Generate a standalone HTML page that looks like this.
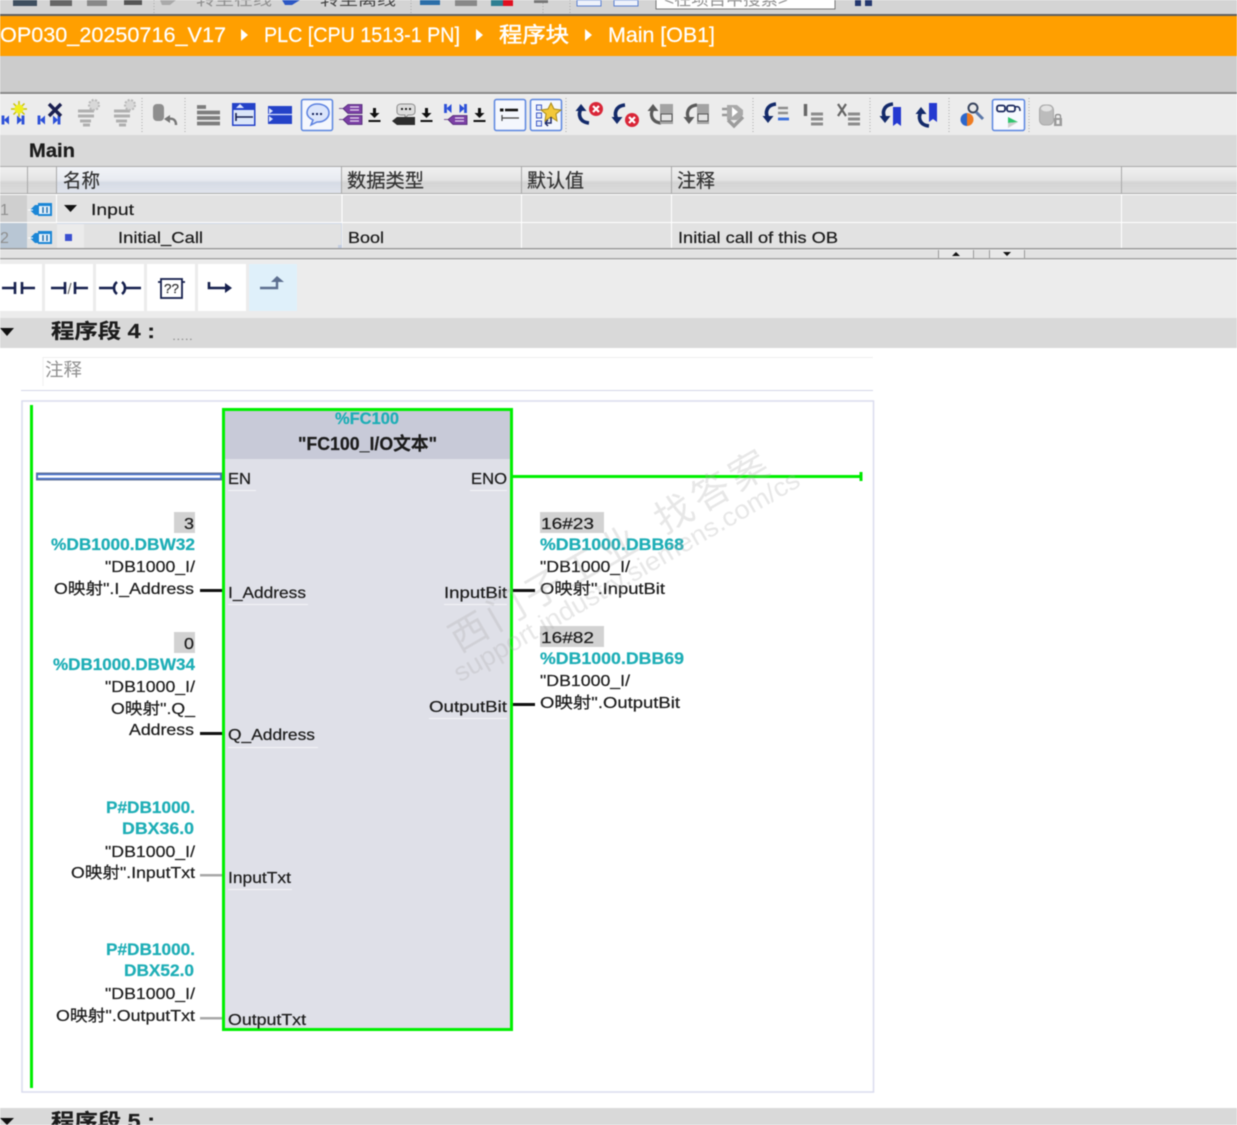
<!DOCTYPE html>
<html lang="zh"><head><meta charset="utf-8"><title>Main [OB1]</title>
<style>
html,body{margin:0;padding:0;background:#fff;width:1237px;height:1125px;overflow:hidden}
svg{display:block;filter:blur(.45px)}
text{font-family:"Liberation Sans","Noto Sans CJK SC",sans-serif;font-size:16px;fill:#1c1c1c;stroke:#1c1c1c;stroke-width:.22px}
.b{font-weight:bold}
.t{fill:#1eaeb6;stroke:#1eaeb6;font-weight:bold;font-size:17px}
.h{font-size:19px;fill:#333;stroke:#333}
.c{fill:#fff;stroke:#fff;font-size:21px}
.g{fill:#8f8f8f;stroke:none}
.wm{fill:#a9a9a9;fill-opacity:.28;stroke:none}
</style></head><body>
<svg width="1237" height="1125" viewBox="0 0 1237 1125" xmlns="http://www.w3.org/2000/svg">
<defs>
<linearGradient id="hd" x1="0" y1="0" x2="0" y2="1"><stop offset="0" stop-color="#f0f0f0"/><stop offset=".5" stop-color="#e4e4e4"/><stop offset=".6" stop-color="#d4d4d4"/><stop offset="1" stop-color="#dcdcdc"/></linearGradient>
<linearGradient id="hb" x1="0" y1="0" x2="0" y2="1"><stop offset="0" stop-color="#f2f4f8"/><stop offset=".5" stop-color="#e8ebf1"/><stop offset=".6" stop-color="#d6dbe5"/><stop offset="1" stop-color="#e0e4ec"/></linearGradient>
<g id="tag"><path d="M-12 0l5-5h3v-2h14v13h-14v-1h-3z" fill="#1b86d6"/><rect x="-3" y="-4" width="11" height="8" fill="#e6f2fb"/><path d="M1-3v6M5-3v6" stroke="#1668aa" stroke-width="1.4"/><path d="M-14 0h5" stroke="#fff" stroke-width="1"/></g>
<g id="pt"><path d="M-12-0.500h4M-8-.5l5-4h14v9h-14z" fill="#7b3fa5" stroke="#4a2370" stroke-width=".8"/><path d="M-1-2h9M-1 1h9" stroke="#e8dcf2" stroke-width="1.300"/></g>
<g id="dl"><path d="M0-7v6" stroke="#111" stroke-width="3"/><path d="M-5-2h10l-5 5z" fill="#111"/><path d="M-6 6h12" stroke="#111" stroke-width="2"/></g>
<g id="kk"><path d="M-10-4.500v9M-8 0h4M4 0h4M10-4.500v9" stroke="#2b4fd8" stroke-width="2.800" fill="none"/><path d="M-9 0l5-4.500v9zM9 0l-5-4.500v9z" fill="#2b4fd8"/></g>
<g id="gl"><path d="M-12 6h16M-12 11h16M-10 16h11M-7 20h7" stroke="#b0b0b0" stroke-width="3"/><circle cx="4" cy="0" r="5" fill="#d8d8d8" stroke="#b9b9b9" stroke-width="2" stroke-dasharray="2 1.500"/></g>
<g id="ar"><path d="M5-9C-5-8-6 0-3 5" stroke="#132a6a" stroke-width="3.600" fill="none"/><path d="M-8.500 3h11l-5.500 7z" fill="#132a6a"/></g>
<g id="aru"><path d="M5 9C-5 8-6 0-3-5" stroke="#132a6a" stroke-width="3.600" fill="none"/><path d="M-8.500-3h11l-5.500-7z" fill="#132a6a"/></g>
<g id="ag"><path d="M5-9C-5-8-6 0-3 5" stroke="#5a5a5a" stroke-width="3.200" fill="none"/><path d="M-8.500 3h11l-5.500 7z" fill="#5a5a5a"/></g>
<g id="agu"><path d="M5 9C-5 8-6 0-3-5" stroke="#5a5a5a" stroke-width="3.200" fill="none"/><path d="M-8.500-3h11l-5.500-7z" fill="#5a5a5a"/></g>
<g id="er"><circle r="7" fill="#d92638"/><path d="M-3-3l6 6M3-3l-6 6" stroke="#fff" stroke-width="2.200"/></g>
<g id="bars"><path d="M-6-5H6M-6 0H6M-6 5H6" stroke="#8c8c8c" stroke-width="3"/></g>
</defs>

<!-- top partial toolbar -->
<rect width="1237" height="15" fill="#d4d4d4"/>
<rect x="13" y="0" width="24" height="6" fill="#3f4f5f"/><rect x="50" y="0" width="22" height="6" fill="#666"/><rect x="87" y="0" width="20" height="6" fill="#888"/><rect x="124" y="0" width="18" height="5" fill="#555"/>
<path d="M160 0h16l-6 5h-8z" fill="#aaa"/>
<path d="M282 0h18l-8 5h-7z" fill="#2c57c4"/>
<text x="196" y="5" textLength="76" lengthAdjust="spacingAndGlyphs" class="g">转至在线</text>
<text x="320" y="5" textLength="76" lengthAdjust="spacingAndGlyphs" style="fill:#444;stroke:none">转至离线</text>
<path d="M154 0v14M411 0v14M543 0v14M570 0v14" stroke="#aaa" stroke-dasharray="1 2"/>
<rect x="420" y="0" width="20" height="5" fill="#2b6ea8"/><rect x="455" y="0" width="22" height="6" fill="#888"/><rect x="491" y="0" width="12" height="6" fill="#2d7f92"/><rect x="503" y="0" width="10" height="6" fill="#e01020"/>
<rect x="534" y="0" width="14" height="3" fill="#777"/>
<rect x="577" y="0" width="24" height="6" fill="#eef2fb" stroke="#5a7fd0"/><rect x="614" y="0" width="24" height="6" fill="#eef2fb" stroke="#5a7fd0"/>
<rect x="656" y="-3" width="179" height="12" fill="#fff" stroke="#777"/>
<text x="664" y="5" textLength="124" lengthAdjust="spacingAndGlyphs" class="g">&lt;在项目中搜索&gt;</text>
<rect x="855" y="0" width="6" height="6" fill="#24376e"/><rect x="865" y="0" width="7" height="6" fill="#24376e"/>
<rect y="14" width="1237" height="2" fill="#5f5f5f"/>

<!-- breadcrumb -->
<rect y="16" width="1237" height="40" fill="#ff9f00"/>
<text class="c" x="0" y="42" textLength="226" lengthAdjust="spacingAndGlyphs">OP030_20250716_V17</text>
<path d="M241 29l7 6-7 6zM476 29l7 6-7 6zM585 29l7 6-7 6z" fill="#fff"/>
<text class="c" x="264" y="42" textLength="196" lengthAdjust="spacingAndGlyphs">PLC [CPU 1513-1 PN]</text>
<text class="c" x="499" y="42" textLength="70" lengthAdjust="spacingAndGlyphs" style="stroke-width:.5px">程序块</text>
<text class="c" x="608" y="42" textLength="107" lengthAdjust="spacingAndGlyphs">Main [OB1]</text>

<rect y="56" width="1237" height="37" fill="#cccccc"/>
<rect y="92" width="1237" height="2" fill="#8a8a8a"/>
<rect y="94" width="1237" height="1" fill="#f6f6f6"/>

<!-- toolbar -->
<rect y="95" width="1237" height="40" fill="#ececec"/>
<path d="M142 98v34M185 98v34M566 98v34M753 98v34M870 98v34M949 98v34M1029 98v34" stroke="#aaa" stroke-dasharray="1 2"/>
<rect x="301.500" y="99.500" width="31" height="31" rx="2" fill="#f4f7fd" stroke="#5b86e0" stroke-width="1.500"/>
<rect x="494.500" y="99.500" width="31" height="31" rx="2" fill="#f4f7fd" stroke="#5b86e0" stroke-width="1.500"/>
<rect x="530.500" y="99.500" width="31" height="31" rx="2" fill="#f4f7fd" stroke="#5b86e0" stroke-width="1.500"/>
<rect x="992.500" y="99.500" width="32" height="31" rx="2" fill="#f7f9fe" stroke="#5b86e0" stroke-width="1.500"/>

<!-- new network / delete -->
<use href="#kk" x="13" y="120"/>
<path d="M11 109H27M19 101v16M13.500 103.500l11 11M13.500 114.500l11-11" stroke="#c9c400" stroke-width="1.500"/><circle cx="19" cy="109" r="4.500" fill="#f0ee20"/>
<use href="#kk" x="49" y="120"/>
<path d="M49 104l12 12M61 104l-12 12" stroke="#1b2050" stroke-width="3.400"/>
<use href="#gl" x="90" y="105"/>
<use href="#gl" x="126" y="105"/>
<!-- undo db -->
<rect x="153" y="104" width="11" height="17" rx="4" fill="#8e8e8e"/><path d="M176 125c0-6-4-7-8-6" stroke="#777" stroke-width="2.400" fill="none"/><path d="M164 119l6-4v8z" fill="#777"/>
<!-- lists -->
<path d="M197 107h9M197 112.500h23M197 118h23M197 123.500h23" stroke="#7d7d7d" stroke-width="3.800"/>
<rect x="232.750" y="103.750" width="22" height="21.500" fill="#dbe6f9" stroke="#2442c8" stroke-width="1.500"/><rect x="233" y="103" width="22" height="7" fill="#2442c8"/><path d="M236 108h8l-4-4z" fill="#dfe7ff"/><path d="M236 117h17M236 113v8" stroke="#141e50" stroke-width="1.600"/>
<rect x="268" y="106" width="24" height="18" fill="#2442c8"/><path d="M268 114.500h24" stroke="#dfe7ff" stroke-width="1.200"/><path d="M269 108l4 3-4 3zM269 116l4 3-4 3z" fill="#dfe7ff"/>
<!-- comment -->
<path d="M317 104c8 0 12 4 12 9s-5 9-11 9l-1 0-6 3 2-5c-4-2-6-4-6-7 0-5 4-9 10-9z" fill="#dbe5fb" stroke="#5a80e0" stroke-width="1.500"/><path d="M312 114h2M316 114h2M320 114h2" stroke="#14205a" stroke-width="2"/>
<!-- purple tags -->
<use href="#pt" x="351" y="109"/><use href="#pt" x="351" y="120"/>
<use href="#dl" x="374.500" y="115"/>
<!-- grey speech -->
<path d="M397 107c0-2 2-3 4-3h10c2 0 4 1 4 3v5c0 2-2 3-4 3h-3l-3 3v-3h-4c-2 0-4-1-4-3z" fill="#dcdcdc" stroke="#8a8a8a"/><path d="M401 109h2M405 109h2M409 109h2" stroke="#222" stroke-width="2"/><path d="M392 121l5-4h18v8h-18z" fill="#2d2d2d"/>
<use href="#dl" x="426.500" y="115"/>
<use href="#kk" x="455.500" y="108.500"/><use href="#pt" x="456" y="120"/>
<use href="#dl" x="479.500" y="115"/>
<!-- list highlight -->
<path d="M500 110h3.500" stroke="#111" stroke-width="3"/><path d="M505 110h13" stroke="#111" stroke-width="2.600"/><path d="M502 118h17M502 115v6" stroke="#444" stroke-width="1.200"/>
<!-- favourites -->
<path d="M536.500 105h5v5h-5zM536.500 113h5v5h-5zM536.500 121h5v5h-5z" fill="#e6ecfb" stroke="#3c57c4"/>
<path d="M551 103l3 6 7 1-5 4 1 7-6-4-6 4 1-7-5-4 7-1z" fill="#f3c83a" stroke="#a98a1a"/><path d="M551 117v6h-6M545 123l3-3M545 123l3 3" stroke="#1d2a6b" stroke-width="1.500" fill="none"/>
<!-- arrows + errors -->
<use href="#aru" x="584" y="114"/><use href="#er" x="596" y="109"/>
<use href="#ar" x="620" y="114"/><use href="#er" x="632" y="120"/>
<use href="#agu" x="656" y="114"/><rect x="660" y="104" width="13" height="20" fill="#a3a3a3"/><rect x="661" y="114" width="11" height="7" fill="#e2e2e2" stroke="#555"/>
<use href="#ag" x="692" y="114"/><rect x="697" y="104" width="12" height="20" fill="#a3a3a3"/><rect x="698" y="114" width="10" height="7" fill="#e2e2e2" stroke="#555"/>
<path d="M727 105h10l6 5v5l-6 5h-10z" fill="#a9a9a9"/><path d="M732 107l6 5-6 5z" fill="#fff"/><path d="M722 109h5M722 115h5" stroke="#999" stroke-width="2.400"/><path d="M728 120l6 6 9-9" stroke="#9c9c9c" stroke-width="3.400" fill="none"/>
<!-- arrow group 2 -->
<use href="#ar" x="771" y="113"/><path d="M778 108h10M778 113h10" stroke="#8f8f8f" stroke-width="2.600"/><path d="M778 119h11" stroke="#3a6edc" stroke-width="2.800"/>
<path d="M805.500 104v12" stroke="#666" stroke-width="3.400"/><use href="#bars" x="817" y="119"/>
<path d="M838 104l8 12M846 104l-8 12" stroke="#666" stroke-width="2.200"/><use href="#bars" x="854" y="119"/>
<!-- bookmarks -->
<use href="#ar" x="888" y="113"/><path d="M893 107h8v19l-4-3-4 3z" fill="#2439d0"/>
<use href="#aru" x="924" y="117"/><path d="M929 103h8v19l-4-3-4 3z" fill="#2439d0"/>
<!-- search -->
<path d="M967 113a6.500 6.500 0 0 0 0 13z" fill="#2d67cc"/><path d="M967 113a6.500 6.500 0 0 1 0 13z" fill="#ee7b21"/><circle cx="973" cy="108" r="4.500" fill="#e8e8e8" stroke="#39455e" stroke-width="2"/><path d="M976 112l7 7" stroke="#5b78a8" stroke-width="3"/>
<!-- glasses -->
<rect x="997" y="105.500" width="8" height="6" rx="2" fill="#fff" stroke="#1c2a60" stroke-width="1.800"/><rect x="1007" y="105.500" width="8" height="6" rx="2" fill="#fff" stroke="#1c2a60" stroke-width="1.800"/><path d="M1015 107c3-1 5 0 5 4" fill="none" stroke="#1c2a60" stroke-width="1.600"/>
<path d="M1008 117l10 5-10 1z" fill="#2fc56d"/><path d="M1008 123l10-1-10 6z" fill="#cfcfcf"/>
<!-- db lock -->
<rect x="1039.500" y="105" width="14" height="20" rx="5" fill="#bcbcbc" stroke="#aaa"/><ellipse cx="1046.500" cy="108.500" rx="5.500" ry="3" fill="#e2e2e2"/><rect x="1054" y="118" width="8" height="8" fill="#9b9b9b"/><path d="M1055.500 118v-2c0-2 5-2 5 0v2" fill="none" stroke="#888" stroke-width="1.200"/><rect x="1056.500" y="120" width="3" height="4" fill="#eee"/>

<!-- Main header -->
<rect y="135" width="1237" height="31" fill="#d9d9d9"/>
<text x="29" y="157" textLength="46" lengthAdjust="spacingAndGlyphs" class="b" style="font-size:19px">Main</text>
<rect y="166" width="1237" height="1" fill="#aaa"/>

<!-- table header -->
<rect y="167" width="1237" height="26" fill="url(#hd)"/>
<rect x="57" y="167" width="284" height="26" fill="url(#hb)"/>
<path d="M27.500 166v27M56.500 166v27M341.500 166v27M521.500 166v27M671.500 166v27M1121.500 166v27" stroke="#a9a9a9"/>
<rect y="193" width="1237" height="1" fill="#a9a9a9"/>
<text class="h" x="63" y="187" textLength="37" lengthAdjust="spacingAndGlyphs">名称</text>
<text class="h" x="347" y="187" textLength="77" lengthAdjust="spacingAndGlyphs">数据类型</text>
<text class="h" x="527" y="187" textLength="57" lengthAdjust="spacingAndGlyphs">默认值</text>
<text class="h" x="677" y="187" textLength="38" lengthAdjust="spacingAndGlyphs">注释</text>

<!-- rows -->
<rect y="194" width="1237" height="55" fill="#e2e2e2"/>
<rect x="0" y="195" width="27" height="27" fill="#cfcfcf"/>
<rect x="0" y="223" width="27" height="26" fill="#b8c6d4"/>
<path d="M0 194.500h1237M0 222.500h1237" stroke="#fff"/>
<path d="M342 194v55M521.500 194v55M671.500 194v55M1121.500 194v55M56.500 194v28" stroke="#fff"/>
<rect x="57.500" y="223.500" width="284" height="25" fill="none" stroke="#cfd7e4"/>
<rect x="57" y="224" width="27" height="24" fill="#ebebeb"/>
<text x="0" y="215" class="g">1</text><text x="0" y="243" class="g">2</text>
<use href="#tag" x="42" y="210"/><use href="#tag" x="42" y="238"/>
<path d="M64 205h13l-6.500 7z" fill="#111"/>
<rect x="65" y="234" width="7" height="7" fill="#3a4fd0"/>
<text x="91" y="215" textLength="43" lengthAdjust="spacingAndGlyphs">Input</text>
<text x="118" y="243" textLength="85" lengthAdjust="spacingAndGlyphs">Initial_Call</text>
<text x="348" y="243" textLength="36" lengthAdjust="spacingAndGlyphs">Bool</text>
<text x="678" y="243" textLength="160" lengthAdjust="spacingAndGlyphs">Initial call of this OB</text>
<rect x="338" y="245" width="4" height="4" fill="#c3cde0"/>

<rect y="248" width="1237" height="1.500" fill="#9b9b9b"/>
<rect y="250" width="1237" height="8" fill="#e2e2e2"/>
<rect x="938" y="250" width="35" height="8" fill="#e8e8e8"/><rect x="989" y="250" width="35" height="8" fill="#e8e8e8"/>
<path d="M938.500 250v8M973.500 250v8M989.500 250v8M1024.500 250v8" stroke="#999"/>
<path d="M952 256h8l-4-4zM1003 252h8l-4 4z" fill="#111"/>
<rect y="258" width="1237" height="1.500" fill="#a5a5a5"/>
<rect y="260" width="1237" height="58" fill="#ececec"/>

<!-- ladder buttons -->
<rect x="0" y="264" width="42" height="47" fill="#fff"/>
<rect x="45" y="264" width="48" height="47" fill="#fff"/>
<rect x="96" y="264" width="48" height="47" fill="#fff"/>
<rect x="147" y="264" width="48" height="47" fill="#fff"/>
<rect x="198" y="264" width="48" height="47" fill="#fff"/>
<rect x="249" y="264" width="48" height="47" fill="#dff0fa"/>
<g stroke="#16204e" stroke-width="2.600" fill="none">
<path d="M2 288h14M15 282v12M22 282v12M22 288h13"/>
<path d="M51 288h14M65 282v12M75 282v12M75 288h13"/><path d="M68 294l3-11" stroke="#666" stroke-width="1.200"/>
<path d="M99 288h14M117 282c-4 3-4 9 0 12M122 282c4 3 4 9 0 12M126 288h15"/>
<rect x="161" y="279" width="21" height="19" stroke-width="1.800"/><path d="M158 282h3M182 282h3" stroke-width="1.800"/>
<path d="M209 282v6h20"/>
</g>
<text x="164" y="293" textLength="15" lengthAdjust="spacingAndGlyphs" style="font-size:13px;fill:#333;stroke:#333">??</text>
<path d="M225 283l7 5-7 5z" fill="#16204e"/>
<path d="M260 288h17v-7" stroke="#5d6f90" stroke-width="2.400" fill="none"/><path d="M271 282l6-6 7 6z" fill="#5d6f90"/>

<!-- network bar -->
<rect y="318" width="1237" height="30" fill="#d9d9d9"/>
<path d="M0 328h14l-7 8z" fill="#111"/>
<text x="51" y="338" textLength="104" lengthAdjust="spacingAndGlyphs" class="b" style="font-size:20px">程序段 4 :</text>
<text x="172" y="340" textLength="21" lengthAdjust="spacingAndGlyphs" class="g" style="font-size:12px">.....</text>

<!-- comment -->
<path d="M43 386V357.500H873" stroke="#efefef" fill="none"/>
<text x="45" y="376" textLength="37" lengthAdjust="spacingAndGlyphs" class="g" style="font-size:18px">注释</text>
<rect x="21" y="390" width="852" height="1" fill="#d4d7e8"/>

<!-- frame -->
<rect x="22" y="401" width="851.500" height="691" fill="#fff" stroke="#dadcee" stroke-width="1.500"/>
<rect x="30" y="405" width="3" height="683" fill="#00ee00"/>

<!-- FB box -->
<rect x="223.500" y="409.500" width="288" height="620" fill="#dfe0e8"/>
<rect x="224" y="410" width="287" height="49" fill="#c8cad8"/>
<rect x="223.500" y="409.500" width="288" height="620" fill="none" stroke="#00f000" stroke-width="3"/>
<text class="t" x="335" y="424" textLength="64" lengthAdjust="spacingAndGlyphs">%FC100</text>
<text class="b" x="298" y="450" textLength="139" lengthAdjust="spacingAndGlyphs" style="font-size:18px">"FC100_I/O文本"</text>

<!-- wires -->
<rect x="36" y="472.500" width="186" height="8" fill="#62749e"/>
<rect x="37" y="474" width="184" height="5" fill="#3f6fd0"/>
<rect x="38" y="475.200" width="182" height="2.600" fill="#fff"/>
<rect x="513" y="475" width="348" height="3" fill="#00f000"/>
<rect x="859.500" y="472" width="3" height="9" fill="#00e800"/>
<rect x="200" y="589" width="22" height="3" fill="#111"/>
<rect x="200" y="732" width="22" height="3" fill="#111"/>
<rect x="200" y="874" width="22" height="2.500" fill="#a8a8a8"/>
<rect x="200" y="1017" width="22" height="2.500" fill="#a8a8a8"/>
<rect x="513" y="589" width="22" height="3" fill="#111"/>
<rect x="513" y="703" width="22" height="3" fill="#111"/>

<!-- pin underlines -->
<path d="M228 490.500h28M470 490.500h37M228 604.500h80M444 604.500h63M228 747.500h90M429 718.500h78M228 889.500h64" stroke="#f4f4f8"/>

<!-- pins -->
<text x="228" y="484" textLength="23" lengthAdjust="spacingAndGlyphs">EN</text>
<text x="471" y="484" textLength="36" lengthAdjust="spacingAndGlyphs">ENO</text>
<text x="228" y="598" textLength="78" lengthAdjust="spacingAndGlyphs">I_Address</text>
<text x="444" y="598" textLength="63" lengthAdjust="spacingAndGlyphs">InputBit</text>
<text x="429" y="712" textLength="78" lengthAdjust="spacingAndGlyphs">OutputBit</text>
<text x="228" y="740" textLength="87" lengthAdjust="spacingAndGlyphs">Q_Address</text>
<text x="228" y="883" textLength="63" lengthAdjust="spacingAndGlyphs">InputTxt</text>
<text x="228" y="1025" textLength="78" lengthAdjust="spacingAndGlyphs">OutputTxt</text>

<!-- left operands -->
<rect x="174" y="512" width="21" height="21" fill="#d2d2d2"/>
<text x="184" y="529" textLength="10" lengthAdjust="spacingAndGlyphs">3</text>
<text class="t" x="51" y="550" textLength="144" lengthAdjust="spacingAndGlyphs">%DB1000.DBW32</text>
<text x="105" y="572" textLength="90" lengthAdjust="spacingAndGlyphs">"DB1000_I/</text>
<text x="54" y="594" textLength="140" lengthAdjust="spacingAndGlyphs">O映射".I_Address</text>

<rect x="174" y="632" width="21" height="21" fill="#d2d2d2"/>
<text x="184" y="649" textLength="10" lengthAdjust="spacingAndGlyphs">0</text>
<text class="t" x="53" y="670" textLength="142" lengthAdjust="spacingAndGlyphs">%DB1000.DBW34</text>
<text x="105" y="692" textLength="90" lengthAdjust="spacingAndGlyphs">"DB1000_I/</text>
<text x="111" y="714" textLength="84" lengthAdjust="spacingAndGlyphs">O映射".Q_</text>
<text x="129" y="735" textLength="65" lengthAdjust="spacingAndGlyphs">Address</text>

<text class="t" x="106" y="813" textLength="89" lengthAdjust="spacingAndGlyphs">P#DB1000.</text>
<text class="t" x="122" y="834" textLength="72" lengthAdjust="spacingAndGlyphs">DBX36.0</text>
<text x="105" y="857" textLength="90" lengthAdjust="spacingAndGlyphs">"DB1000_I/</text>
<text x="71" y="878" textLength="124" lengthAdjust="spacingAndGlyphs">O映射".InputTxt</text>

<text class="t" x="106" y="955" textLength="89" lengthAdjust="spacingAndGlyphs">P#DB1000.</text>
<text class="t" x="124" y="976" textLength="70" lengthAdjust="spacingAndGlyphs">DBX52.0</text>
<text x="105" y="999" textLength="90" lengthAdjust="spacingAndGlyphs">"DB1000_I/</text>
<text x="56" y="1021" textLength="139" lengthAdjust="spacingAndGlyphs">O映射".OutputTxt</text>

<!-- right operands -->
<rect x="540" y="512" width="64" height="21" fill="#d2d2d2"/>
<text x="541" y="529" textLength="53" lengthAdjust="spacingAndGlyphs">16#23</text>
<text class="t" x="540" y="550" textLength="144" lengthAdjust="spacingAndGlyphs">%DB1000.DBB68</text>
<text x="540" y="572" textLength="90" lengthAdjust="spacingAndGlyphs">"DB1000_I/</text>
<text x="540" y="594" textLength="125" lengthAdjust="spacingAndGlyphs">O映射".InputBit</text>

<rect x="540" y="626" width="64" height="21" fill="#d2d2d2"/>
<text x="541" y="643" textLength="53" lengthAdjust="spacingAndGlyphs">16#82</text>
<text class="t" x="540" y="664" textLength="144" lengthAdjust="spacingAndGlyphs">%DB1000.DBB69</text>
<text x="540" y="686" textLength="90" lengthAdjust="spacingAndGlyphs">"DB1000_I/</text>
<text x="540" y="708" textLength="140" lengthAdjust="spacingAndGlyphs">O映射".OutputBit</text>

<!-- watermark, above the diagram -->
<g transform="translate(459,653) rotate(-30)">
<text class="wm" x="0" y="0" style="font-size:38px;letter-spacing:5px">西门子工业</text>
<text class="wm" x="237" y="0" style="font-size:38px;letter-spacing:5px">找答案</text>
<text class="wm" x="-14" y="26" textLength="395" lengthAdjust="spacingAndGlyphs" style="font-size:26px">support.industry.siemens.com/cs</text>
</g>

<!-- next network -->
<rect y="1108" width="1237" height="17" fill="#d9d9d9"/>
<path d="M0 1118h14l-7 7z" fill="#111"/>
<text x="51" y="1128" textLength="104" lengthAdjust="spacingAndGlyphs" class="b" style="font-size:20px">程序段 5 :</text>
</svg>
</body></html>
